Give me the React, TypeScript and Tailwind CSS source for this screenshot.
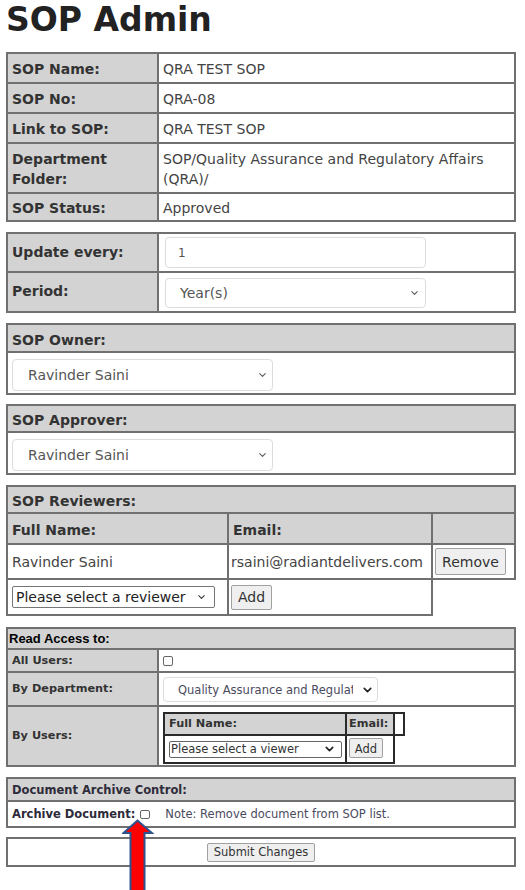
import React from "react";
import { ChevronDown } from "lucide-react";

const line = "border-[#707070]";

function Picker({
  value,
  className,
  textClass,
  chevronClass,
  strong,
}: {
  value: string;
  className: string;
  textClass: string;
  chevronClass: string;
  strong?: boolean;
}) {
  return (
    <div className={`relative ${className}`}>
      <select
        defaultValue={value}
        className={`appearance-none w-full h-full bg-white outline-none ${textClass}`}
      >
        <option>{value}</option>
      </select>
      <ChevronDown
        size={strong ? 13 : 11}
        strokeWidth={strong ? 3 : 2.2}
        className={`absolute top-1/2 -translate-y-1/2 pointer-events-none ${chevronClass}`}
      />
    </div>
  );
}

function InfoRow({
  label,
  children,
  last,
  pad = "pt-[5px] pb-[3px]",
}: {
  label: React.ReactNode;
  children: React.ReactNode;
  last?: boolean;
  pad?: string;
}) {
  return (
    <div className={last ? "flex" : `flex border-b-2 ${line}`}>
      <div className={`w-[151px] shrink-0 border-r-2 ${line} bg-[#d3d3d3] font-bold text-[#333] px-1 ${pad}`}>
        {label}
      </div>
      <div className={`flex-1 px-1 ${pad}`}>{children}</div>
    </div>
  );
}

function Header({ children }: { children: React.ReactNode }) {
  return (
    <div className={`bg-[#d3d3d3] border-b-2 ${line} font-bold text-[#333] px-1 pt-[5px] pb-[1px]`}>
      {children}
    </div>
  );
}

export default function App() {
  return (
    <div className="relative w-[525px] min-h-[890px] bg-white font-['DejaVu_Sans',Verdana,sans-serif] text-[#444] text-[14px] leading-5">
      <h1 className="text-[33px] leading-[40px] font-bold text-[#222] pl-[6px] mb-[12px]">SOP Admin</h1>

      <div className="ml-[6px] w-[510px]">
        {/* SOP details */}
        <div className={`border-2 ${line}`}>
          <InfoRow label="SOP Name:">QRA TEST SOP</InfoRow>
          <InfoRow label="SOP No:">QRA-08</InfoRow>
          <InfoRow label="Link to SOP:">QRA TEST SOP</InfoRow>
          <InfoRow label={<>Department<br />Folder:</>}>
            SOP/Quality Assurance and Regulatory Affairs (QRA)/
          </InfoRow>
          <InfoRow label="SOP Status:" last pad="pt-[4px] pb-[2px]">Approved</InfoRow>
        </div>

        {/* Review period */}
        <div className={`mt-[10px] border-2 ${line}`}>
          <div className={`flex border-b-2 ${line}`}>
            <div className={`w-[151px] shrink-0 border-r-2 ${line} bg-[#d3d3d3] font-bold text-[#333] px-1 pt-2`}>
              Update every:
            </div>
            <div className="flex-1 pl-[6px] pt-[3px] pb-[3px]">
              <input
                defaultValue="1"
                className="w-[261px] h-[31px] border border-[#dcdcdc] rounded-[4px] pl-[12px] text-[12px] text-[#555] outline-none"
              />
            </div>
          </div>
          <div className="flex">
            <div className={`w-[151px] shrink-0 border-r-2 ${line} bg-[#d3d3d3] font-bold text-[#333] px-1 pt-2`}>
              Period:
            </div>
            <div className="flex-1 pl-[6px] pt-[5px] pb-[3px]">
              <Picker
                value="Year(s)"
                className="w-[261px] h-[30px]"
                textClass="border border-[#dcdcdc] rounded-[4px] pl-[14px] text-[14px] text-[#555]"
                chevronClass="right-[6px] text-[#555]"
              />
            </div>
          </div>
        </div>

        {/* Owner */}
        <div className={`mt-[10px] border-2 ${line}`}>
          <Header>SOP Owner:</Header>
          <div className="px-1 pt-[6px] pb-[2px]">
            <Picker
              value="Ravinder Saini"
              className="w-[261px] h-[32px]"
              textClass="border border-[#dcdcdc] rounded-[4px] pl-[15px] text-[14px] text-[#555]"
              chevronClass="right-[5px] text-[#555]"
            />
          </div>
        </div>

        {/* Approver */}
        <div className={`mt-[9px] border-2 ${line}`}>
          <div className={`bg-[#d3d3d3] border-b-2 ${line} font-bold text-[#333] px-1 pt-[4px] pb-[1px]`}>
            SOP Approver:
          </div>
          <div className="px-1 pt-[6px] pb-[2px]">
            <Picker
              value="Ravinder Saini"
              className="w-[261px] h-[32px]"
              textClass="border border-[#dcdcdc] rounded-[4px] pl-[15px] text-[14px] text-[#555]"
              chevronClass="right-[5px] text-[#555]"
            />
          </div>
        </div>

        {/* Reviewers */}
        <div className="mt-[10px]">
          <div className={`border-x-2 border-t-2 ${line}`}>
            <div className={`bg-[#d3d3d3] border-b-2 ${line} font-bold text-[#333] px-1 pt-[4px] pb-[1px]`}>
              SOP Reviewers:
            </div>
            <div className={`grid grid-cols-[221px_204px_1fr] border-b-2 ${line} bg-[#d3d3d3] font-bold text-[#333]`}>
              <div className={`border-r-2 ${line} px-1 pt-[6px] pb-[3px]`}>Full Name:</div>
              <div className={`border-r-2 ${line} px-1 pt-[6px] pb-[3px]`}>Email:</div>
              <div />
            </div>
            <div className={`grid grid-cols-[221px_204px_1fr] border-b-2 ${line} h-[35px]`}>
              <div className={`border-r-2 ${line} px-1 flex items-center`}>Ravinder Saini</div>
              <div className={`border-r-2 ${line} px-[2px] flex items-center`}>rsaini@radiantdelivers.com</div>
              <div className="flex items-center pl-[2px]">
                <button className="w-[71px] h-[27px] bg-[#efefef] border border-[#a0a0a0] rounded-[2px] text-[14px] text-[#333]">
                  Remove
                </button>
              </div>
            </div>
          </div>
          <div className={`w-[427px] grid grid-cols-[221px_1fr] border-x-2 border-b-2 ${line} h-[36px]`}>
            <div className={`border-r-2 ${line} pl-1 flex items-center`}>
              <Picker
                value="Please select a reviewer"
                className="w-[203px] h-[22px]"
                textClass="border border-[#767676] rounded-[2px] pl-[3px] text-[14px] text-[#222]"
                chevronClass="right-[8px] text-[#333]"
              />
            </div>
            <div className="pl-[2px] flex items-center">
              <button className="w-[41px] h-[25px] bg-[#efefef] border border-[#a0a0a0] rounded-[2px] text-[14px] text-[#333]">
                Add
              </button>
            </div>
          </div>
        </div>

        {/* Read access */}
        <div className={`mt-[11px] border-2 ${line} text-[11.3px]`}>
          <div className={`bg-[#d3d3d3] border-b-2 ${line} font-['Liberation_Sans',Arial,sans-serif] font-bold text-[13px] text-black leading-[19px] pl-[1px]`}>
            Read Access to:
          </div>
          <div className={`flex border-b-2 ${line} h-[23px]`}>
            <div className={`w-[151px] shrink-0 border-r-2 ${line} bg-[#d3d3d3] font-bold text-[#333] px-1 flex items-center`}>
              All Users:
            </div>
            <div className="flex-1 pl-1 flex items-center">
              <input type="checkbox" className="appearance-none w-[10px] h-[10px] border border-[#666] rounded-[2px] bg-white" />
            </div>
          </div>
          <div className={`flex border-b-2 ${line} h-[34px]`}>
            <div className={`w-[151px] shrink-0 border-r-2 ${line} bg-[#d3d3d3] font-bold text-[#333] px-1 flex items-center`}>
              By Department:
            </div>
            <div className="flex-1 pl-1 pt-[4px]">
              <Picker
                value="Quality Assurance and Regulatory Affairs (QRA)"
                className="w-[215px] h-[25px]"
                textClass="border border-[#dcdcdc] rounded-[4px] pl-[14px] pr-[24px] text-[11.5px] text-[#4a4a5e] overflow-hidden whitespace-nowrap text-clip"
                chevronClass="right-[4px] text-[#222]"
                strong
              />
            </div>
          </div>
          <div className="flex h-[58px]">
            <div className={`w-[151px] shrink-0 border-r-2 ${line} bg-[#d3d3d3] font-bold text-[#333] px-1 flex items-center`}>
              By Users:
            </div>
            <div className="flex-1 pl-1 pt-[5px]">
              <div className="w-[242px] font-bold text-[#333]">
                <div className="flex h-[24px]">
                  <div className="w-[184px] border-2 border-[#2a2a2a] bg-[#d3d3d3] px-1 flex items-center">Full Name:</div>
                  <div className="w-[48px] border-y-2 border-r-2 border-[#2a2a2a] bg-[#d3d3d3] pl-[2px] flex items-center">Email:</div>
                  <div className="w-[10px] border-y-2 border-r-2 border-[#2a2a2a]" />
                </div>
                <div className="flex h-[28px] w-[232px] border-x-2 border-b-2 border-[#2a2a2a] font-normal">
                  <div className="w-[182px] border-r-2 border-[#2a2a2a] pl-[4px] pt-[4px]">
                    <Picker
                      value="Please select a viewer"
                      className="w-[173px] h-[17px]"
                      textClass="border-[1.5px] border-[#666] rounded-[2px] pl-[1px] text-[11.5px] leading-[13px] text-[#333]"
                      chevronClass="right-[6px] text-[#222]"
                      strong
                    />
                  </div>
                  <div className="pl-[2px] pt-[2px]">
                    <button className="w-[34px] h-[20px] bg-[#efefef] border border-[#a0a0a0] rounded-[2px] text-[11.5px] text-[#333]">
                      Add
                    </button>
                  </div>
                </div>
              </div>
            </div>
          </div>
        </div>

        {/* Archive */}
        <div className={`mt-[10px] border-2 ${line} text-[11.5px]`}>
          <div className={`bg-[#d3d3d3] border-b-2 ${line} font-bold text-[#2e2b3a] h-[23px] px-1 flex items-center`}>
            Document Archive Control:
          </div>
          <div className="flex items-center h-[24px] pl-1">
            <span className="font-bold text-[#2e2b3a]">Archive Document:</span>
            <input type="checkbox" className="appearance-none ml-[5px] w-[10px] h-[9px] border border-[#666] rounded-[2px] bg-white" />
            <span className="ml-[15px] text-[11.5px] text-[#4a4a5e]">Note: Remove document from SOP list.</span>
          </div>
        </div>

        {/* Submit */}
        <div className={`mt-[9px] border-2 ${line} h-[30px] flex items-center justify-center`}>
          <button className="h-[19px] px-[6px] bg-[#efefef] border border-[#a0a0a0] rounded-[2px] text-[11.5px] leading-[16px] text-[#333]">
            Submit Changes
          </button>
        </div>
      </div>

      {/* annotation arrow */}
      <svg className="absolute left-[122px] top-[819px]" width="32" height="71" viewBox="0 0 32 71">
        <polygon
          points="15.5,1.5 1.5,14 8.5,14 8.5,72 22.5,72 22.5,14 30,14"
          fill="#ff0000"
          stroke="#2f528f"
          strokeWidth="2"
          strokeLinejoin="miter"
        />
      </svg>
    </div>
  );
}
